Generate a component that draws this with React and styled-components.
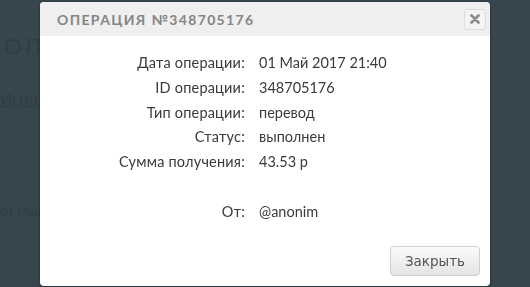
import React from "react";
import styled, { createGlobalStyle } from "styled-components";

const GlobalStyle = createGlobalStyle`
  html, body {
    margin: 0;
    padding: 0;
    background: #37454c;
    font-family: "Lato", "Open Sans", sans-serif;
  }
`;

const rows = [
  ["Дата операции:", "01 Май 2017 21:40"],
  ["ID операции:", "348705176"],
  ["Тип операции:", "перевод"],
  ["Статус:", "выполнен"],
  ["Сумма получения:", "43.53 р"],
  ["", ""],
  ["От:", "@anonim"],
];

export default function App() {
  return (
    <>
      <GlobalStyle />
      <Page>
        <BackTitle>ОПЕРАЦИИ</BackTitle>
        <BackLink>Исполнено</BackLink>
        <BackDate>01 Май 2017 21:40</BackDate>
      </Page>
      <Overlay>
        <Modal>
          <Header>
            <Title>Операция №348705176</Title>
            <CloseX aria-label="close">
              <svg width="10" height="10" viewBox="0 0 10 10">
                <path d="M1.5 1.5 L8.5 8.5 M8.5 1.5 L1.5 8.5" stroke="#8a8a8a" strokeWidth="2.6" strokeLinecap="round" />
              </svg>
            </CloseX>
          </Header>
          <Body>
            {rows.map(([label, value], i) => (
              <Row key={i}>
                <Label>{label}</Label>
                <Value>{value}</Value>
              </Row>
            ))}
          </Body>
          <Footer>
            <Button>Закрыть</Button>
          </Footer>
        </Modal>
      </Overlay>
    </>
  );
}

const Page = styled.div`
  width: 530px;
  height: 287px;
  padding: 32px 0 0 0;
  box-sizing: border-box;
  display: flex;
  flex-direction: column;
  color: #303d44;
`;

const BackTitle = styled.div`
  font-size: 22px;
  letter-spacing: 4px;
  padding-left: 4px;
`;

const BackLink = styled.div`
  margin-top: 30px;
  font-size: 16px;
  text-decoration: underline;
`;

const BackDate = styled.div`
  margin-top: 96px;
  font-size: 12px;
`;

const Overlay = styled.div`
  position: fixed;
  inset: 0;
  display: flex;
  align-items: flex-start;
  padding: 2px 0 0 40px;
`;

const Modal = styled.div`
  width: 450px;
  height: 284px;
  background: #fff;
  border-radius: 4px;
  box-shadow: 0 1px 3px rgba(0, 0, 0, 0.4);
  display: flex;
  flex-direction: column;
  overflow: hidden;
`;

const Header = styled.div`
  height: 34px;
  background: #efefef;
  display: flex;
  align-items: center;
  justify-content: space-between;
  padding: 0 4px 0 17px;
`;

const Title = styled.div`
  font-size: 14px;
  font-weight: 700;
  letter-spacing: 1.35px;
  text-transform: uppercase;
  color: #858585;
`;

const CloseX = styled.div`
  width: 20px;
  height: 19px;
  border: 1px solid #dcdcdc;
  border-radius: 3px;
  background: #f3f3f3;
  display: flex;
  align-items: center;
  justify-content: center;
`;

const Body = styled.div`
  padding-top: 14px;
  display: flex;
  flex-direction: column;
`;

const Row = styled.div`
  display: grid;
  grid-template-columns: 205px 1fr;
  column-gap: 14px;
  height: 24.8px;
  line-height: 25px;
  font-size: 14.5px;
  color: #3a3a3a;
`;

const Label = styled.div`
  text-align: right;
  letter-spacing: 0.2px;
`;

const Value = styled.div``;

const Footer = styled.div`
  margin-top: auto;
  display: flex;
  justify-content: flex-end;
  padding: 0 10px 10px 0;
`;

const Button = styled.button`
  width: 90px;
  height: 30px;
  border: 1px solid #cfcfcf;
  border-radius: 4px;
  background: linear-gradient(#fbfbfb, #e4e4e4);
  font-family: "DejaVu Sans", Verdana, sans-serif;
  font-size: 13.5px;
  color: #555;
  padding: 0;
`;
